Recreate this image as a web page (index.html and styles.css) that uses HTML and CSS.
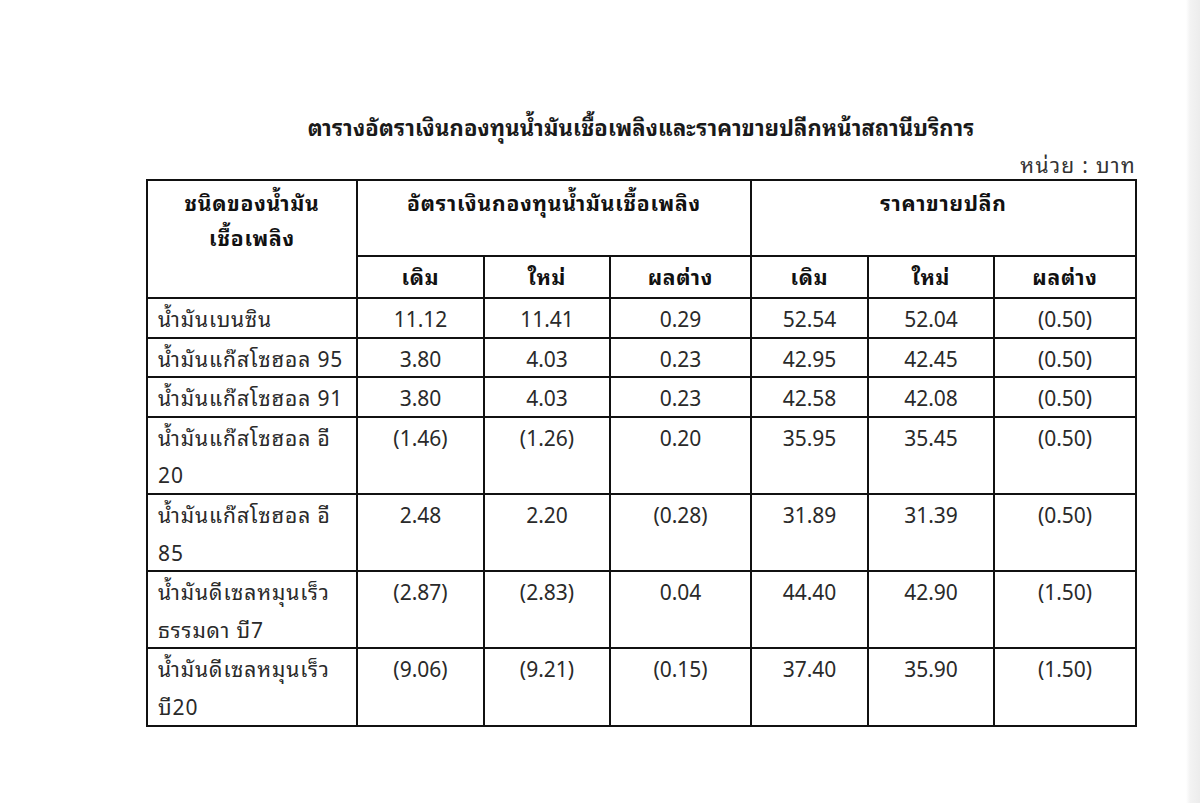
FILE: index.html
```html
<!DOCTYPE html>
<html lang="th">
<head>
<meta charset="utf-8">
<title>ตารางอัตราเงินกองทุนน้ำมันเชื้อเพลิง</title>
<link rel="stylesheet" href="styles.css">
</head>
<body>
<div class="page">
  <h1 class="title">ตารางอัตราเงินกองทุนน้ำมันเชื้อเพลิงและราคาขายปลีกหน้าสถานีบริการ</h1>
  <div class="unit">หน่วย : บาท</div>
  <table class="fund">
    <colgroup>
      <col class="c-name"><col class="c1"><col class="c2"><col class="c3"><col class="c4"><col class="c5"><col class="c6">
    </colgroup>
    <thead>
      <tr class="h1">
        <th rowspan="2" class="name-h">ชนิดของน้ำมัน<br>เชื้อเพลิง</th>
        <th colspan="3">อัตราเงินกองทุนน้ำมันเชื้อเพลิง</th>
        <th colspan="3">ราคาขายปลีก</th>
      </tr>
      <tr class="h2">
        <th>เดิม</th><th>ใหม่</th><th>ผลต่าง</th>
        <th>เดิม</th><th>ใหม่</th><th>ผลต่าง</th>
      </tr>
    </thead>
    <tbody>
      <tr><td class="name">น้ำมันเบนซิน</td><td>11.12</td><td>11.41</td><td>0.29</td><td>52.54</td><td>52.04</td><td>(0.50)</td></tr>
      <tr><td class="name">น้ำมันแก๊สโซฮอล 95</td><td>3.80</td><td>4.03</td><td>0.23</td><td>42.95</td><td>42.45</td><td>(0.50)</td></tr>
      <tr><td class="name">น้ำมันแก๊สโซฮอล 91</td><td>3.80</td><td>4.03</td><td>0.23</td><td>42.58</td><td>42.08</td><td>(0.50)</td></tr>
      <tr><td class="name">น้ำมันแก๊สโซฮอล อี<br>20</td><td>(1.46)</td><td>(1.26)</td><td>0.20</td><td>35.95</td><td>35.45</td><td>(0.50)</td></tr>
      <tr><td class="name">น้ำมันแก๊สโซฮอล อี<br>85</td><td>2.48</td><td>2.20</td><td>(0.28)</td><td>31.89</td><td>31.39</td><td>(0.50)</td></tr>
      <tr><td class="name">น้ำมันดีเซลหมุนเร็ว<br>ธรรมดา บี7</td><td>(2.87)</td><td>(2.83)</td><td>0.04</td><td>44.40</td><td>42.90</td><td>(1.50)</td></tr>
      <tr><td class="name">น้ำมันดีเซลหมุนเร็ว<br>บี20</td><td>(9.06)</td><td>(9.21)</td><td>(0.15)</td><td>37.40</td><td>35.90</td><td>(1.50)</td></tr>
    </tbody>
  </table>
</div>
</body>
</html>
```
FILE: styles.css
```css
html, body {
  margin: 0;
  padding: 0;
  background: #ffffff;
}
body {
  width: 1200px;
  min-height: 803px;
  background: linear-gradient(to right, #ffffff 0, #ffffff 1186px, #f3f3f3 1190px, #ececec 1200px);
  font-family: "Tahoma", "Noto Sans Thai Looped", "Noto Sans Thai", "DejaVu Sans", "Noto Sans", sans-serif;
  color: #2a2a2a;
}
.page {
  width: 990px;
  margin-left: 146px;
  padding-top: 110px;
}
.title {
  margin: 0;
  font-size: 22px;
  font-weight: bold;
  text-align: center;
  line-height: 32px;
  letter-spacing: 0.15px;
  color: #1a1a1a;
}
.unit {
  text-align: right;
  font-size: 21px;
  line-height: 28px;
  margin-top: 8px;
  letter-spacing: 1.3px;
  color: #333;
}
.fund {
  width: 990px;
  border-collapse: collapse;
  table-layout: fixed;
  font-size: 21px;
  margin-top: 1px;
}
.c-name { width: 210px; }
.c1 { width: 127px; }
.c2 { width: 126px; }
.c3 { width: 141px; }
.c4 { width: 117px; }
.c5 { width: 126px; }
.c6 { width: 142px; }
.fund th, .fund td {
  border: 2px solid #111;
  padding: 0 6px;
  vertical-align: top;
  text-align: center;
  line-height: 37.6px;
}
.fund th {
  font-weight: bold;
  color: #111;
  letter-spacing: 0.8px;
}
.fund .h1 th {
  height: 76px;
  padding-top: 3px;
  line-height: 35px;
  box-sizing: border-box;
}
.fund .h2 th {
  height: 40px;
  line-height: 38px;
}
.fund td.name {
  text-align: left;
  padding-left: 10px;
  padding-right: 0;
  letter-spacing: 0.9px;
  white-space: nowrap;
}
```
